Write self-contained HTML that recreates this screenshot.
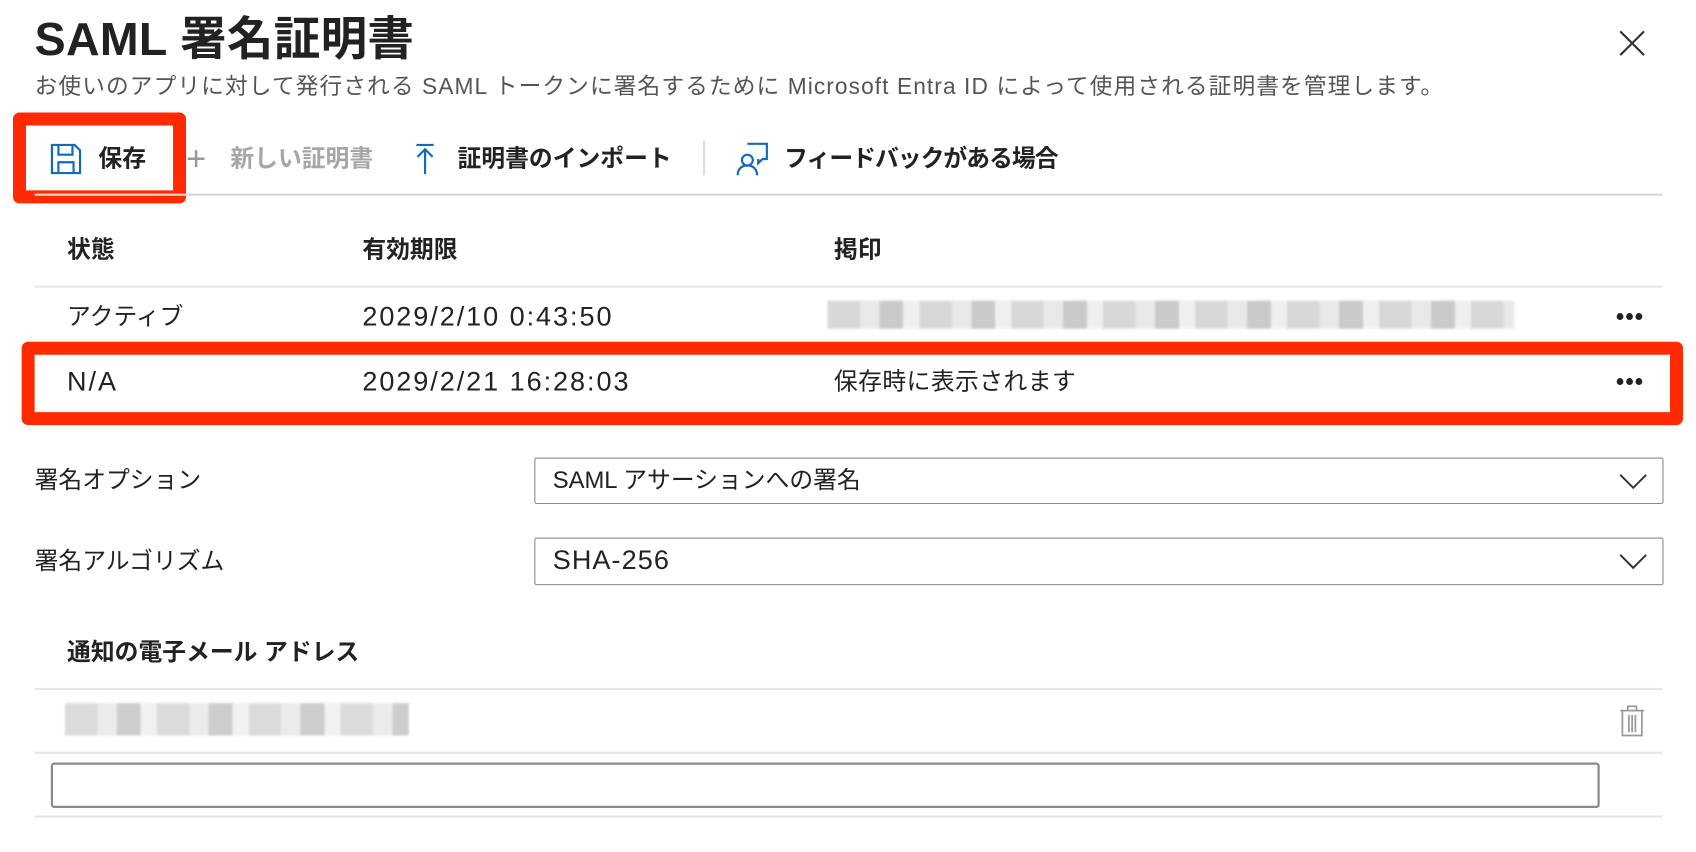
<!DOCTYPE html>
<html><head><meta charset="utf-8"><style>
html,body{margin:0;padding:0;background:#fff;width:1696px;height:852px;overflow:hidden}
#w{position:absolute;left:0;top:0;width:1568px;height:788px;transform:scale(1.0816);transform-origin:0 0;font-family:"Liberation Sans","Noto Sans CJK JP",sans-serif;color:#222}
.a{position:absolute;white-space:nowrap}
.t{font-size:22px;line-height:30px}
.b{font-weight:bold}
.ln{position:absolute;left:32px;width:1505px;height:2px;background:#e6e6e6}
.blur{position:absolute;background:repeating-linear-gradient(90deg,#cfcfcf 0 30px,#e4e4e4 30px 48px,#bdbdbd 48px 70px,#ececec 70px 85px);filter:blur(1px)}
.box{position:absolute;border:1.5px solid #8a8a8a;box-sizing:border-box;border-radius:2px}
.red{position:absolute;border:12px solid #ff2a00;box-sizing:border-box;border-radius:6px}
.dots{position:absolute;font-size:22px;letter-spacing:1px;font-weight:bold}
.n{font-size:25px;letter-spacing:1.8px}
</style></head><body><div id="w">
<div class="a b" style="left:32px;top:12px;font-size:43px;line-height:50px;letter-spacing:0.3px">SAML 署名証明書</div>
<svg class="a" style="left:1497px;top:28px" width="24" height="24"><path d="M1 1L23 23M23 1L1 23" stroke="#333" stroke-width="2"/></svg>
<div class="a" style="left:32px;top:67px;font-size:21px;line-height:28px;color:#555;letter-spacing:1px">お使いのアプリに対して発行される SAML トークンに署名するために Microsoft Entra ID によって使用される証明書を管理します。</div>

<svg class="a" style="left:46px;top:132px" width="30" height="30"><path d="M2 2H23L28 7V28H2Z" fill="none" stroke="#0f6cbd" stroke-width="2"/><path d="M8 2V11H21V2M8 28V18H22V28" fill="none" stroke="#0f6cbd" stroke-width="2"/></svg>
<div class="a t b" style="left:91px;top:132px">保存</div>
<div class="a" style="left:172px;top:130px;font-size:32px;line-height:32px;color:#999;font-weight:200">+</div>
<div class="a t b" style="left:213px;top:132px;color:#a6a6a6">新しい証明書</div>
<svg class="a" style="left:383px;top:132px" width="20" height="30"><path d="M2 2H18M10 6V29M3 13L10 6L17 13" fill="none" stroke="#0f6cbd" stroke-width="2"/></svg>
<div class="a t b" style="left:423px;top:132px">証明書のインポート</div>
<div class="a" style="left:650px;top:130px;width:2px;height:32px;background:#ddd"></div>
<svg class="a" style="left:681px;top:131px" width="30" height="32"><path d="M10 2H28V16H24L20 20V16" fill="none" stroke="#0f6cbd" stroke-width="2"/><circle cx="10" cy="17" r="5" fill="none" stroke="#0f6cbd" stroke-width="2"/><path d="M1 31C1 25 5 22 10 22C15 22 19 25 19 31" fill="none" stroke="#0f6cbd" stroke-width="2"/></svg>
<div class="a t b" style="left:725px;top:132px;letter-spacing:-0.9px">フィードバックがある場合</div>
<div class="red" style="left:12px;top:104px;width:160px;height:84px"></div>
<div class="ln" style="top:179px;background:#d6d6d6"></div>

<div class="a t b" style="left:62px;top:216px">状態</div>
<div class="a t b" style="left:335px;top:216px">有効期限</div>
<div class="a t b" style="left:771px;top:216px">掲印</div>
<div class="ln" style="top:264px"></div>

<div class="a t" style="left:62px;top:278px">アクティブ</div>
<div class="a t n" style="left:335px;top:278px">2029/2/10 0:43:50</div>
<div class="blur" style="left:765px;top:278px;width:635px;height:26px;opacity:.8"></div>
<div class="dots" style="left:1494px;top:280px">•••</div>

<div class="a t n" style="left:62px;top:338px">N/A</div>
<div class="a t n" style="left:335px;top:338px">2029/2/21 16:28:03</div>
<div class="a t" style="left:771px;top:338px;letter-spacing:0.4px">保存時に表示されます</div>
<div class="dots" style="left:1494px;top:340px">•••</div>
<div class="red" style="left:20px;top:316px;width:1536px;height:77px"></div>

<div class="a t" style="left:32px;top:429px">署名オプション</div>
<div class="box" style="left:494px;top:423px;width:1044px;height:43px"></div>
<div class="a t" style="left:511px;top:429px">SAML アサーションへの署名</div>
<svg class="a" style="left:1497px;top:437px" width="26" height="16"><path d="M1 2L13 14L25 2" fill="none" stroke="#333" stroke-width="1.8"/></svg>

<div class="a t" style="left:32px;top:504px">署名アルゴリズム</div>
<div class="box" style="left:494px;top:497px;width:1044px;height:44px"></div>
<div class="a t n" style="left:511px;top:503px;letter-spacing:1px">SHA-256</div>
<svg class="a" style="left:1497px;top:511px" width="26" height="16"><path d="M1 2L13 14L25 2" fill="none" stroke="#333" stroke-width="1.8"/></svg>

<div class="a t b" style="left:62px;top:588px">通知の電子メール アドレス</div>
<div class="ln" style="top:636px"></div>
<div class="blur" style="left:60px;top:650px;width:318px;height:30px;opacity:.75"></div>
<svg class="a" style="left:1497px;top:652px" width="24" height="30"><path d="M1 5H23M8 5V1H16V5M3 5V28H21V5M9 9V25M12 9V25M15 9V25" fill="none" stroke="#999" stroke-width="1.6"/></svg>
<div class="ln" style="top:695px"></div>
<div class="box" style="left:47px;top:705px;width:1432px;height:42px;border-width:2px;border-radius:3px"></div>
<div class="ln" style="top:754px"></div>
</div></body></html>
